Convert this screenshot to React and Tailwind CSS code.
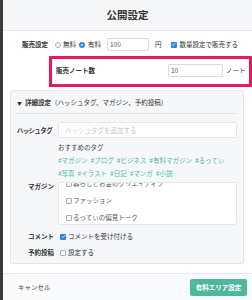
import React from 'react';

const Radio = ({ on }) => (
  <span
    className={`inline-flex w-[6px] h-[6px] rounded-full items-center justify-center ${
      on ? 'bg-[#2f80e8]' : 'border border-[#a9adb3] bg-white'
    }`}
  >
    {on && <span className="w-[2px] h-[2px] rounded-full bg-white" />}
  </span>
);

const Check = ({ on }) => (
  <span
    className={`inline-flex shrink-0 w-[6px] h-[6px] rounded-[1px] items-center justify-center ${
      on ? 'bg-[#2f80e8]' : 'border border-[#a9adb3] bg-white'
    }`}
  >
    {on && (
      <svg viewBox="0 0 6 6" className="w-[5px] h-[5px]">
        <path d="M1.2 3.1 L2.4 4.3 L4.8 1.6" fill="none" stroke="white" strokeWidth="1" />
      </svg>
    )}
  </span>
);

const tags1 = ['#マガジン', '#ブログ', '#ビジネス', '#有料マガジン', '#るってぃ'];
const tags2 = ['#写真', '#イラスト', '#日記', '#マンガ', '#小説'];
const magazines = ['暮らしとお金のクリエイティブ', 'ファッション', 'るってぃの偏見トーク'];

export default function App() {
  return (
    <div className="flex w-[252px] h-[300px] overflow-hidden bg-white text-[#333] font-['Noto_Sans_CJK_JP','Noto_Sans',sans-serif]">
      <div className="w-[3px] shrink-0 bg-[#3a3a3a]" />

      <div className="flex-1 flex flex-col">
        {/* Header */}
        <div className="h-[31px] shrink-0 flex items-center justify-center bg-[#f6f7f8] border-b border-[#e6e8eb] text-[10.5px] font-bold">
          公開設定
        </div>

        {/* Price row */}
        <div className="flex items-center h-[13px] mt-[7px] pl-[19px] text-[6.5px] leading-none">
          <span className="w-[33px] font-bold">販売設定</span>
          <Radio />
          <span className="ml-[2px]">無料</span>
          <span className="ml-[3px] flex"><Radio on /></span>
          <span className="ml-[3px]">有料</span>
          <div className="ml-[6px] w-[42px] h-[13px] flex items-center pl-[2px] bg-white border border-[#d9dcdf] rounded-[1px] text-[6.5px] text-[#555]">
            100
          </div>
          <span className="ml-[6px]">円</span>
          <span className="ml-[9px] flex"><Check on /></span>
          <span className="ml-[3px]">数量設定で販売する</span>
        </div>

        {/* Highlighted note count */}
        <div className="ml-[46px] mt-[5px] w-[203px] h-[31px] shrink-0 border-[3px] border-[#e5195e]">
          <div className="flex items-center h-full pb-[3px] text-[6.5px] leading-none">
            <span className="w-[116px] pl-[4px] font-bold">販売ノート数</span>
            <div className="w-[55px] h-[13px] flex items-center pl-[2px] bg-white border border-[#d9dcdf] rounded-[1px] text-[#555]">
              10
            </div>
            <span className="ml-[3px]">ノート</span>
          </div>
        </div>

        {/* Details panel */}
        <div className="ml-[7px] mt-[3px] w-[234px] h-[174px] shrink-0 px-[5px] bg-[#f6f7f9] border border-[#e2e5e9] rounded-[2px] text-[6.5px] leading-none">
          <div className="h-[23px] flex items-center pl-[1px] border-b border-[#e2e5e9]">
            <span className="text-[5px]">▼</span>
            <span className="ml-[3px] font-bold">詳細設定</span>
            <span>（ハッシュタグ、マガジン、予約投稿）</span>
          </div>

          <div className="flex items-center mt-[8px] h-[16px]">
            <span className="w-[42px] pl-[1px] font-bold [font-feature-settings:'palt']">ハッシュタグ</span>
            <div className="w-[179px] h-[16px] flex items-center pl-[6px] bg-white border border-[#e5e7eb] rounded-[2px] text-[#c4c7cb]">
              ハッシュタグを追加する
            </div>
          </div>

          <div className="ml-[42px]">
            <div className="mt-[3px] h-[13px] flex items-center text-[#444]">おすすめのタグ</div>
            <div className="h-[13px] flex items-center gap-[3px] text-[#4dbaa6]">
              {tags1.map((t) => <span key={t}>{t}</span>)}
            </div>
            <div className="h-[13px] flex items-center gap-[3px] text-[#4dbaa6]">
              {tags2.map((t) => <span key={t}>{t}</span>)}
            </div>
          </div>

          <div className="flex mt-[2px]">
            <span className="w-[42px] pr-[4px] text-right font-bold leading-[9px]">マガジン</span>
            <div className="w-[179px] h-[43px] overflow-hidden bg-white border border-[#e5e7eb] rounded-[2px]">
              <div className="-mt-[8px]">
                {magazines.map((m) => (
                  <div key={m} className="h-[17px] flex items-center pl-[7px] text-[#555]">
                    <Check />
                    <span className="ml-[1px]">{m}</span>
                  </div>
                ))}
              </div>
            </div>
          </div>

          <div className="flex items-center mt-[6px] h-[11px]">
            <span className="w-[42px] pr-[4px] text-right font-bold">コメント</span>
            <span className="ml-[2px] flex"><Check on /></span>
            <span className="ml-[2px]">コメントを受け付ける</span>
          </div>

          <div className="flex items-center mt-[5px] h-[11px]">
            <span className="w-[42px] pr-[4px] text-right font-bold">予約投稿</span>
            <span className="ml-[2px] flex"><Check /></span>
            <span className="ml-[2px]">設定する</span>
          </div>
        </div>

        {/* Footer */}
        <div className="mt-[9px] flex-1 flex items-center justify-between pl-[15px] pr-[5px] bg-[#f9fafb] border-t border-[#e6e8eb] text-[6.5px] leading-none">
          <span className="text-[#444]">キャンセル</span>
          <button className="w-[57px] h-[17px] rounded-[2px] bg-[#4fb79d] text-white font-bold">
            有料エリア設定
          </button>
        </div>
      </div>
    </div>
  );
}
